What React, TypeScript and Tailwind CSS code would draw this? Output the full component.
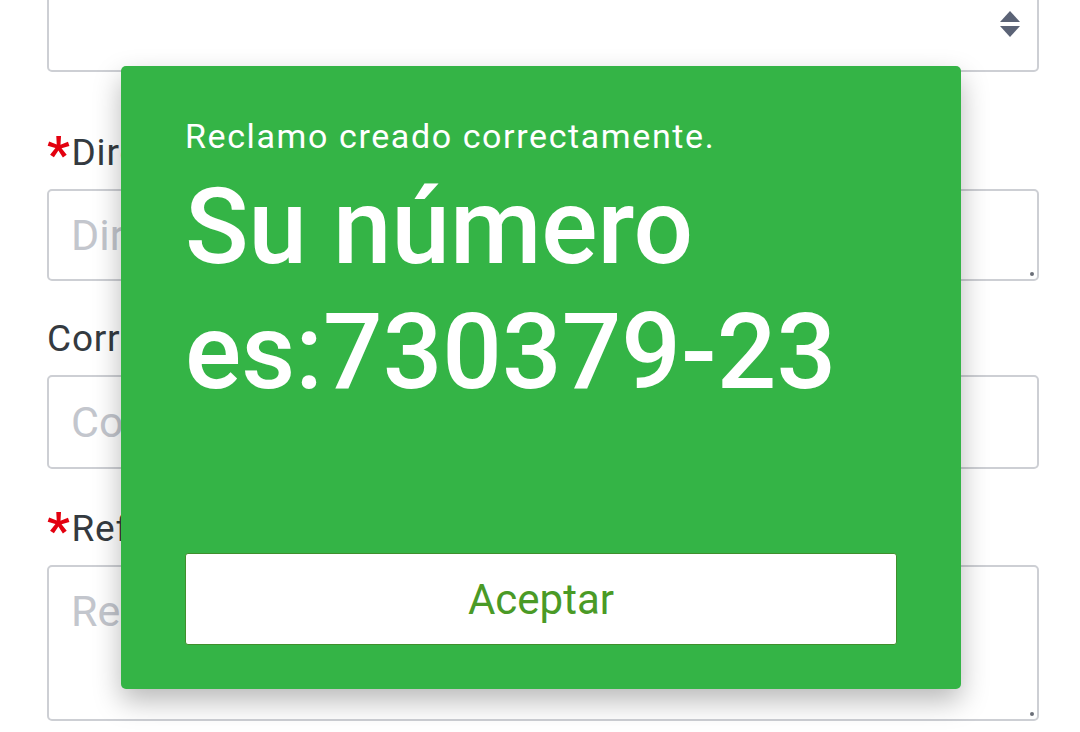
import { useState } from 'react';

function SelectArrows() {
  return (
    <svg width="22" height="28" viewBox="0 0 22 28" className="text-[#5b6376]">
      <path d="M11 1 L21 12 H1 Z" fill="currentColor" />
      <path d="M1 16 H21 L11 27 Z" fill="currentColor" />
    </svg>
  );
}

function FieldLabel({ text, required }: { text: string; required?: boolean }) {
  return (
    <label className="flex items-center h-[51px] text-[37px] leading-[51px] tracking-[0.8px] text-[#343a40] mb-[11px]">
      {required && <span className="text-[#e3000f] font-bold text-[50px] leading-none mt-[4px] mr-[1px]">*</span>}
      {text}
    </label>
  );
}

// resize grip dot seen on the textareas
function Grip() {
  return <span className="absolute right-[5px] bottom-[5px] w-[4px] h-[4px] rounded-full bg-[#6b6f78]" />;
}

export default function App() {
  const [open, setOpen] = useState(true);

  return (
    <div className="relative w-[1080px] h-[732px] overflow-hidden bg-white font-['Roboto',sans-serif]">
      {/* form behind the dialog */}
      <div className="pl-[47px] pr-[41px]">
        <div className="-mt-[19px] h-[91px] rounded-[5px] border-2 border-[#cdcfd4] flex items-center justify-end pr-[16px]">
          <div className="-mt-[5px]">
            <SelectArrows />
          </div>
        </div>

        <div className="mt-[55px]">
          <FieldLabel text="Dirección" required />
          <div className="relative">
            <textarea
              placeholder="Dirección"
              className="block w-full h-[92px] resize-none rounded-[5px] border-2 border-[#cdcfd4] px-[22px] pt-[12px] text-[43px] leading-[1.5] text-[#343a40] placeholder:text-[#c3c6cd] outline-none"
            />
            <Grip />
          </div>
        </div>

        <div className="mt-[32px]">
          <FieldLabel text="Correo electrónico" />
          <input
            placeholder="Correo electrónico"
            className="block w-full h-[94px] rounded-[5px] border-2 border-[#cdcfd4] px-[22px] text-[43px] text-[#343a40] placeholder:text-[#c3c6cd] outline-none"
          />
        </div>

        <div className="mt-[34px]">
          <FieldLabel text="Referencia" required />
          <div className="relative">
            <textarea
              placeholder="Referencia"
              className="block w-full h-[156px] resize-none rounded-[5px] border-2 border-[#cdcfd4] px-[22px] pt-[12px] text-[43px] leading-[1.5] text-[#343a40] placeholder:text-[#c3c6cd] outline-none"
            />
            <Grip />
          </div>
        </div>
      </div>

      {/* success dialog */}
      {open && (
        <div className="absolute left-[121px] top-[66px] w-[840px] h-[623px] rounded-[5px] bg-[#34b446] shadow-[0_12px_28px_rgba(0,0,0,0.28)] px-[64px] pt-[51px] pb-[44px] flex flex-col">
          <p className="text-[34px] leading-[38px] tracking-[1.6px] text-white">Reclamo creado correctamente.</p>
          <h2 className="mt-[10px] text-[105px] leading-[125px] font-medium text-white">
            Su número es:730379-23
          </h2>
          <button
            onClick={() => setOpen(false)}
            className="mt-auto h-[92px] w-full rounded-[3px] border border-[#3f8f2c] bg-white text-[42px] text-[#4a9a26]"
          >
            Aceptar
          </button>
        </div>
      )}
    </div>
  );
}
